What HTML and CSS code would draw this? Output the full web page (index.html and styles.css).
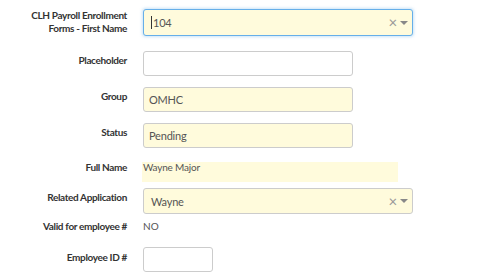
FILE: index.html
```html
<!DOCTYPE html>
<html lang="en">
<head>
    <meta charset="UTF-8">
    <title>CLH Payroll Enrollment</title>
    <link rel="stylesheet" href="styles.css">
</head>
<body>
    <div class="form">
        <div class="row row-first">
            <label class="lbl">CLH Payroll Enrollment<br>Forms - First Name</label>
            <div class="field">
                <div class="select focused">
                    <span class="val"><span class="caret"></span>104</span>
                    <span class="clear">&times;</span>
                    <span class="arrow"></span>
                </div>
            </div>
        </div>
        <div class="row row-ph">
            <label class="lbl">Placeholder</label>
            <div class="field"><div class="input"></div></div>
        </div>
        <div class="row row-group">
            <label class="lbl">Group</label>
            <div class="field"><div class="input filled">OMHC</div></div>
        </div>
        <div class="row row-status">
            <label class="lbl">Status</label>
            <div class="field"><div class="input filled">Pending</div></div>
        </div>
        <div class="row row-name">
            <label class="lbl">Full Name</label>
            <div class="field"><div class="static">Wayne Major</div></div>
        </div>
        <div class="row row-app">
            <label class="lbl">Related Application</label>
            <div class="field">
                <div class="select">
                    <span class="val">Wayne</span>
                    <span class="clear">&times;</span>
                    <span class="arrow"></span>
                </div>
            </div>
        </div>
        <div class="row row-valid">
            <label class="lbl">Valid for employee #</label>
            <div class="field"><div class="plain">NO</div></div>
        </div>
        <div class="row row-emp">
            <label class="lbl">Employee ID #</label>
            <div class="field"><div class="input short"></div></div>
        </div>
    </div>
</body>
</html>
```

FILE: styles.css
```css
body {
    margin: 0;
    font-family: Lato, "Open Sans", sans-serif;
    background: #fff;
    color: #333;
}
.form {
    padding-top: 9px;
}
.row {
    display: flex;
    align-items: flex-start;
}
.lbl {
    width: 127px;
    flex: none;
    text-align: right;
    font-size: 10px;
    font-weight: bold;
    letter-spacing: -0.35px;
    line-height: 13px;
    color: #333;
    padding-top: 3px;
}
.field {
    margin-left: 16px;
}
.input, .select {
    box-sizing: border-box;
    width: 210px;
    height: 25px;
    border: 1px solid #ccc;
    border-radius: 3px;
    background: #fff;
    font-size: 11px;
    letter-spacing: -0.2px;
    color: #555;
    padding: 0 5px;
    display: flex;
    align-items: center;
}
.input.filled {
    background: #fffbdc;
}
.input.short {
    width: 70px;
}
.select {
    width: 270px;
    height: 26px;
    padding: 0 4px 0 7px;
    background: #fffbdc;
}
.select.focused {
    height: 27px;
    border-color: #66afe9;
    box-shadow: 0 0 3px 1px rgba(102, 175, 233, 0.35);
}
.select .val {
    flex: 1;
    display: flex;
    align-items: center;
}
.caret {
    display: inline-block;
    width: 1px;
    height: 13px;
    background: #333;
    margin-right: 1px;
}
.clear {
    color: #999;
    font-size: 15px;
    line-height: 15px;
    margin-right: 3px;
}
.arrow {
    width: 0;
    height: 0;
    border-left: 4px solid transparent;
    border-right: 4px solid transparent;
    border-top: 4px solid #888;
}
.static {
    box-sizing: border-box;
    width: 256px;
    height: 20px;
    margin-left: -1px;
    padding: 0 1px;
    background: #fffbdc;
    font-size: 10px;
    letter-spacing: -0.2px;
    color: #555;
    line-height: 10px;
}
.plain {
    font-size: 10px;
    color: #555;
}
.row-first .lbl { padding-top: 0; }
.row-first { margin-bottom: 15px; }
.row-ph { margin-bottom: 11px; }
.row-group { margin-bottom: 11px; }
.row-status { margin-bottom: 14px; }
.row-name .lbl { padding-top: 0; line-height: 10px; }
.row-name { margin-bottom: 6px; }
.row-valid { margin-top: 6px; margin-bottom: 14px; }
.row-valid .lbl { padding-top: 0; }
.row-emp .lbl { padding-top: 4px; }
```
